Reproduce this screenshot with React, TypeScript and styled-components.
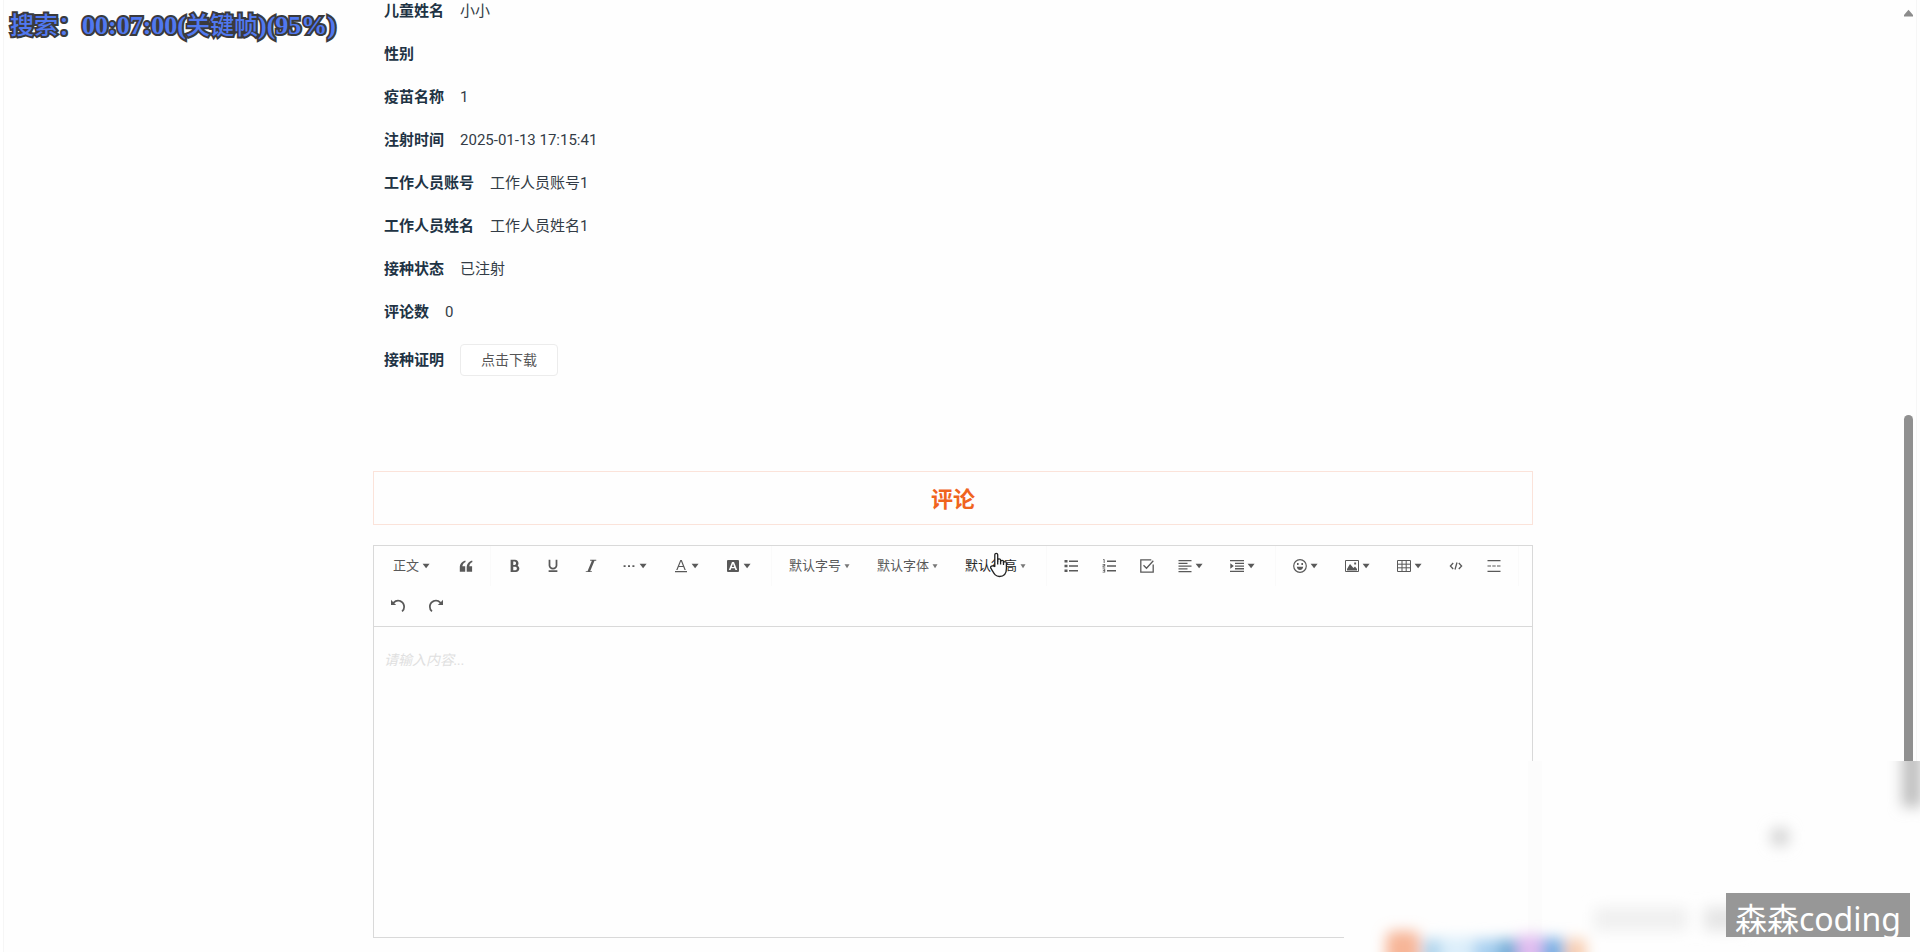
import React from "react";
import styled, { createGlobalStyle, css } from "styled-components";

const GlobalStyle = createGlobalStyle`
  * { box-sizing: border-box; }
  html, body { margin: 0; }
  body {
    background: #fff;
    overflow: hidden;
    font-family: Roboto, "Noto Sans CJK SC", sans-serif;
  }
  button, textarea { font-family: inherit; }
`;

const Page = styled.div`
  position: relative;
  display: flex;
  min-height: 100vh;
  overflow: hidden;
  background: #fefefe;
  border-left: 3px solid #fff;
  box-shadow: inset 1px 0 #f6f6f6;
`;

const Main = styled.main`
  flex: 1;
  padding: 0 20px;
`;

const Container = styled.div`
  max-width: 1160px;
  margin: 0 auto;
`;

const Details = styled.dl`
  margin: 0;
  padding: 0 11px;
`;

const DetailRow = styled.div<{ $first?: boolean; $tall?: boolean }>`
  display: flex;
  align-items: center;
  gap: 16px;
  height: ${(p) => (p.$first ? 32 : p.$tall ? 54 : 43)}px;
  padding-bottom: ${(p) => (p.$first ? 11 : 0)}px;
  font-size: 15px;
  line-height: 20px;
`;

const DetailLabel = styled.dt`
  font-weight: 700;
  color: #213344;
`;

const DetailValue = styled.dd`
  margin: 0;
  color: #333c46;
`;

const DownloadButton = styled.button`
  display: block;
  width: 98px;
  height: 32px;
  padding: 0;
  border: 1px solid #ececec;
  border-radius: 4px;
  background: #fff;
  color: #555;
  font-size: 14px;
  line-height: 20px;
`;

const SectionTitle = styled.h2`
  margin: 84px 0 20px;
  padding: 12px 0 8px;
  border: 1px solid #fbe3da;
  color: #f0641e;
  font-size: 22px;
  line-height: 32px;
  text-align: center;
`;

const Editor = styled.section`
  border: 1px solid #d9d9d9;
`;

const Toolbar = styled.div`
  display: flex;
  flex-wrap: wrap;
  padding: 0 5px;
  border-bottom: 1px solid #d9d9d9;
`;

const ToolItem = styled.div`
  padding: 4px;
`;

const ToolButton = styled.button<{ $kind?: "heading" | "select"; $active?: boolean }>`
  display: flex;
  align-items: center;
  justify-content: center;
  height: 32px;
  padding: 0 8px;
  border: 0;
  background: transparent;
  color: ${(p) => (p.$active ? "#262626" : "#595959")};
  font-size: 13px;
  line-height: 20px;
  ${(p) => p.$kind === "heading" && css`width: 60px;`}
  ${(p) => p.$kind === "select" && css`width: 80px;`}
`;

const Divider = styled.div`
  width: 1px;
  height: 40px;
  margin: 0 5px;
  background: #fafafa;
`;

const Glyph = styled.svg<{ $narrow?: boolean }>`
  display: block;
  flex: none;
  width: ${(p) => (p.$narrow ? 12 : 14)}px;
  height: 14px;
`;

const EditorArea = styled.textarea`
  display: block;
  width: 100%;
  height: 310px;
  padding: 22px 10px;
  border: 0;
  outline: 0;
  resize: none;
  background: transparent;
  font-size: 14px;
  line-height: 22px;
  &::placeholder {
    color: #e0e0e0;
    font-style: italic;
    opacity: 1;
  }
`;

const Scrollbar = styled.div`
  display: flex;
  flex-direction: column;
  align-items: flex-start;
  width: 14px;
  margin-right: 3px;
  padding: 9px 0 0 1px;
  border-right: 1px solid #f6f6f6;
`;

const ArrowUp = styled.svg`
  width: 9px;
  height: 8px;
  margin-bottom: 398px;
`;

const Thumb = styled.div`
  width: 9px;
  flex: 1;
  border-radius: 5px 5px 0 0;
  background: #909090;
`;

const SearchNotice = styled.div`
  position: absolute;
  top: 8px;
  left: 7px;
  color: #5078f0;
  font-family: "Noto Sans CJK SC", sans-serif;
  font-size: 24px;
  font-weight: 500;
  line-height: 32px;
  white-space: nowrap;
  -webkit-text-stroke: 4px #3a3a3c;
  paint-order: stroke fill;
`;

const Latin = styled.span`
  font-family: "Liberation Serif", serif;
  font-size: 26px;
  font-weight: 700;
`;

const Pointer = styled.svg`
  position: absolute;
  top: 552px;
  left: 987px;
  width: 20px;
  height: 26px;
`;

const Haze = styled.svg`
  position: absolute;
  right: 0;
  bottom: 0;
  width: 576px;
  height: 191px;
`;

const Watermark = styled.div`
  position: absolute;
  right: 10px;
  bottom: 15px;
  padding: 8px 9px 0;
  background: #979797;
  color: #fff;
  font-family: "Noto Sans", "Noto Sans CJK SC", sans-serif;
  font-size: 32px;
  line-height: 36px;
  white-space: nowrap;
`;

const Caret = ({ small }: { small?: boolean }) => (
  <Glyph viewBox={small ? "0 0 12 14" : "0 0 14 14"} $narrow={small} fill={small ? "#777" : "currentColor"}>
    <path d={small ? "M3.5 5.2h5L6 9.2z" : "M3.6 4.8h7L7.1 9.2z"} />
  </Glyph>
);

const icons: Record<string, React.ReactNode> = {
  quote: <path d="M6.3 1.6C3 2.5.8 5.2.8 8.6v4.2h5.400V7.300H3.400c.1-2 1.200-3.600 3.200-4.400zM13.100 1.600C9.900 2.500 7.700 5.200 7.700 8.600v4.200h5.400V7.300h-2.800c.1-2 1.200-3.600 3.200-4.400z" />,
  bold: <path transform="scale(.01367)" d="M707.872 484.64A254.88 254.88 0 0 0 768 320c0-141.152-114.848-256-256-256H192v896h384c141.152 0 256-114.848 256-256a256.096 256.096 0 0 0-124.128-219.36zM384 192h101.504c55.968 0 101.504 57.408 101.504 128s-45.536 128-101.504 128H384V192z m159.008 640H384v-256h159.008c58.464 0 106.016 57.408 106.016 128s-47.552 128-106.016 128z" />,
  underline: <path transform="scale(.01367)" d="M704 64h128v416c0 159.072-143.264 288-320 288s-320-128.928-320-288V64h128v416c0 40.16 18.24 78.688 51.36 108.512 36.896 33.216 86.848 51.488 140.64 51.488s103.744-18.304 140.64-51.488c33.12-29.792 51.36-68.352 51.36-108.512zM192 832h640v128H192z" />,
  italic: <path transform="scale(.01367)" d="M896 64v64H768L448 896h128v64H128v-64h128L576 128H448V64z" />,
  more: <path d="M1.6 6.2h2v1.7h-2zM6 6.2h2v1.7H6zM10.4 6.2h2v1.7h-2z" />,
  color: <path d="M6.3.9h1.5l4 10.1h-1.3L9.300 8H4.700l-1.200 3H2.200zM7 2.200 5.100 7h3.800zM1 12h12v1.200H1z" />,
  background: <path fillRule="evenodd" d="M2 1h10a1 1 0 0 1 1 1v10a1 1 0 0 1-1 1H2a1 1 0 0 1-1-1V2a1 1 0 0 1 1-1zm4 2-3.200 8h1.800l.6-1.700h3.600l.6 1.700h1.800L8 3zm1 1.700L8.200 8H5.800z" />,
  bullets: <path d="M.5 1h3v2.600h-3zM5 1.600h9V3H5zM.5 5.700h3v2.600h-3zM5 6.300h9v1.400H5zM.5 10.400h3V13h-3zM5 11h9v1.400H5z" />,
  numbers: <path d="M5 1.600h9V3H5zM5 6.300h9v1.400H5zM5 11h9v1.400H5zM1 .3h1.600V4h-.9V1H1zM.6 5h2.600v2.200H1.500v.5h1.700v.8H.6V6.400h1.700v-.6H.6zM.6 9.500h2.600v4.100H.6v-.8h1.700v-.9H.9v-.7h1.400v-.9H.6z" />,
  check: <path fill="none" stroke="currentColor" strokeWidth="1.300" d="M13.200 5.500v7.700H.8V.9h10.500M3.500 6.200l3 3L13.300 1.700" />,
  align: <path d="M.5 1h13v1.300H.5zM.5 3.800h9v1.300h-9zM.5 6.500h13v1.300H.5zM.5 9.200h9v1.300h-9zM.5 11.900h13v1.300H.5z" />,
  indent: <path d="M0 1h14v1.300H0zM5 3.700h9v1.400H5zM5 6.400h9v1.400H5zM5 9.100h9v1.400H5zM0 11.800h14v1.300H0zM.3 4.300 3.800 7 .3 9.800z" />,
  emoji: (
    <>
      <circle cx="7" cy="7" r="6.300" fill="none" stroke="currentColor" strokeWidth="1.200" />
      <path d="M4 4h1.600v2H4zM8.400 4H10v2H8.400zM3.800 7.800h6.400C9.800 9.900 8.600 11 7 11S4.200 9.900 3.800 7.800z" />
    </>
  ),
  image: (
    <>
      <path fill="none" stroke="currentColor" strokeWidth="1" d="M.5 1.500h13v11H.5z" />
      <path d="M2 11.500V10l3-5 3.400 4L10 7.500l2 2.500v1.500zM9.200 3.500h1.900v1.900H9.200z" />
    </>
  ),
  table: <path fill="none" stroke="currentColor" strokeWidth="1" d="M.5 1.500h13v11H.5zM.5 5.200h13M.5 8.800h13M5 1.500v11M9.200 1.500v11" />,
  code: <path fill="none" stroke="currentColor" strokeWidth="1.300" d="M4.200 4 1.400 7l2.800 3M9.800 4l2.800 3-2.800 3M8 3.500 6 10.500" />,
  rule: <path d="M.5 1h13v1.300H.5zM.5 6.400h3.500v1.200H.5zM5.300 6.400h3.400v1.200H5.300zM10 6.400h3.500v1.200H10zM.5 11.800h13v1.300H.5z" />,
  undo: <path transform="scale(.01367)" d="M512 64A510.272 510.272 0 0 0 149.984 213.984L0.032 64v384h384L240.512 304.48A382.784 382.784 0 0 1 512.032 192c212.064 0 384 171.936 384 384 0 114.688-50.304 217.632-130.016 288l84.672 96a510.72 510.72 0 0 0 173.344-384c0-282.752-229.248-512-512-512z" />,
  redo: <path transform="scale(.01367)" d="M0 576a510.72 510.72 0 0 0 173.344 384l84.672-96A383.136 383.136 0 0 1 128 576C128 363.936 299.936 192 512 192c106.048 0 202.048 42.976 271.52 112.48L640 448h384V64l-149.984 149.984A510.272 510.272 0 0 0 512 64C229.248 64 0 293.248 0 576z" />,
};

const IconTool = ({ name, label, menu }: { name: string; label: string; menu?: boolean }) => (
  <ToolItem>
    <ToolButton type="button" aria-label={label}>
      <Glyph viewBox="0 0 14 14" fill="currentColor">{icons[name]}</Glyph>
      {menu && <Caret />}
    </ToolButton>
  </ToolItem>
);

const SelectTool = ({ text, active }: { text: string; active?: boolean }) => (
  <ToolItem>
    <ToolButton type="button" $kind="select" $active={active}>
      {text}
      <Caret small />
    </ToolButton>
  </ToolItem>
);

const details = [
  ["儿童姓名", "小小"],
  ["性别", ""],
  ["疫苗名称", "1"],
  ["注射时间", "2025-01-13 17:15:41"],
  ["工作人员账号", "工作人员账号1"],
  ["工作人员姓名", "工作人员姓名1"],
  ["接种状态", "已注射"],
  ["评论数", "0"],
];

export default function App() {
  return (
    <>
      <GlobalStyle />
      <Page>
        <Main>
          <Container>
            <Details>
              {details.map(([label, value], i) => (
                <DetailRow key={label} $first={i === 0}>
                  <DetailLabel>{label}</DetailLabel>
                  <DetailValue>{value}</DetailValue>
                </DetailRow>
              ))}
              <DetailRow $tall>
                <DetailLabel>接种证明</DetailLabel>
                <DetailValue>
                  <DownloadButton type="button">点击下载</DownloadButton>
                </DetailValue>
              </DetailRow>
            </Details>
            <SectionTitle>评论</SectionTitle>
            <Editor>
              <Toolbar role="toolbar">
                <ToolItem>
                  <ToolButton type="button" $kind="heading">
                    正文
                    <Caret />
                  </ToolButton>
                </ToolItem>
                <IconTool name="quote" label="引用" />
                <Divider />
                <IconTool name="bold" label="粗体" />
                <IconTool name="underline" label="下划线" />
                <IconTool name="italic" label="斜体" />
                <IconTool name="more" label="更多" menu />
                <IconTool name="color" label="文字颜色" menu />
                <IconTool name="background" label="背景色" menu />
                <Divider />
                <SelectTool text="默认字号" />
                <SelectTool text="默认字体" />
                <SelectTool text="默认行高" active />
                <Divider />
                <IconTool name="bullets" label="无序列表" />
                <IconTool name="numbers" label="有序列表" />
                <IconTool name="check" label="待办" />
                <IconTool name="align" label="对齐" menu />
                <IconTool name="indent" label="缩进" menu />
                <Divider />
                <IconTool name="emoji" label="表情" menu />
                <IconTool name="image" label="图片" menu />
                <IconTool name="table" label="表格" menu />
                <IconTool name="code" label="代码块" />
                <IconTool name="rule" label="分割线" />
                <Divider />
                <IconTool name="undo" label="撤销" />
                <IconTool name="redo" label="重做" />
              </Toolbar>
              <EditorArea aria-label="评论内容" placeholder="请输入内容..." />
            </Editor>
          </Container>
        </Main>
        <Scrollbar>
          <ArrowUp viewBox="0 0 9 8" fill="#8c8c8c">
            <path d="M4.500 .8 9 6v1.500H0V6z" />
          </ArrowUp>
          <Thumb />
        </Scrollbar>
        <Pointer viewBox="0 0 20 26" fill="#fff" stroke="#222" strokeWidth="1.300" strokeLinejoin="round">
          <path d="M4.800 14.500V2.800c0-2 2.900-2 2.900 0v6.400-1c0-1.800 2.900-1.800 2.900 0v1.400c0-1.700 2.900-1.600 2.900 0v1.200c0-1.500 2.900-1.500 2.900.3v5.400c0 4.800-2.300 8-7 8-4.200 0-5.300-2.900-8.600-8.300-1-1.800 1.500-3.300 4-1.700z" />
          <path d="M7.700 8.500v4M10.600 9v3.500M13.500 10v3" />
        </Pointer>
        <Haze viewBox="0 0 576 191">
          <defs>
            <filter id="haze" x="-50%" y="-50%" width="200%" height="200%">
              <feGaussianBlur stdDeviation="7" />
            </filter>
          </defs>
          <rect width="576" height="191" fill="#fefefe" />
          <rect x="184" width="14" height="176" fill="#fcfcfc" />
          <g filter="url(#haze)">
            <rect x="558" y="-30" width="20" height="76" fill="#c0c0c0" />
            <rect x="427" y="67" width="18" height="18" rx="5" fill="#d4d4d4" />
            <rect x="250" y="146" width="94" height="24" fill="#f0f0f0" />
            <rect x="360" y="146" width="40" height="24" fill="#e6e6e6" />
            <rect x="42" y="170" width="34" height="50" rx="8" fill="#f7b597" />
            <rect x="80" y="178" width="16" height="40" fill="#a9d2ec" />
            <rect x="96" y="176" width="34" height="42" fill="#dceefa" />
            <rect x="130" y="178" width="24" height="40" fill="#a8d0f0" />
            <rect x="154" y="178" width="20" height="40" fill="#77afd8" />
            <rect x="174" y="174" width="24" height="44" fill="#e2bdf0" />
            <rect x="198" y="177" width="22" height="40" fill="#78b0e4" />
            <rect x="222" y="178" width="20" height="40" fill="#f8cdb0" />
          </g>
        </Haze>
        <Watermark>森森coding</Watermark>
        <SearchNotice>
          搜索：<Latin>00:07:00(</Latin>关键帧<Latin>)(95%)</Latin>
        </SearchNotice>
      </Page>
    </>
  );
}
